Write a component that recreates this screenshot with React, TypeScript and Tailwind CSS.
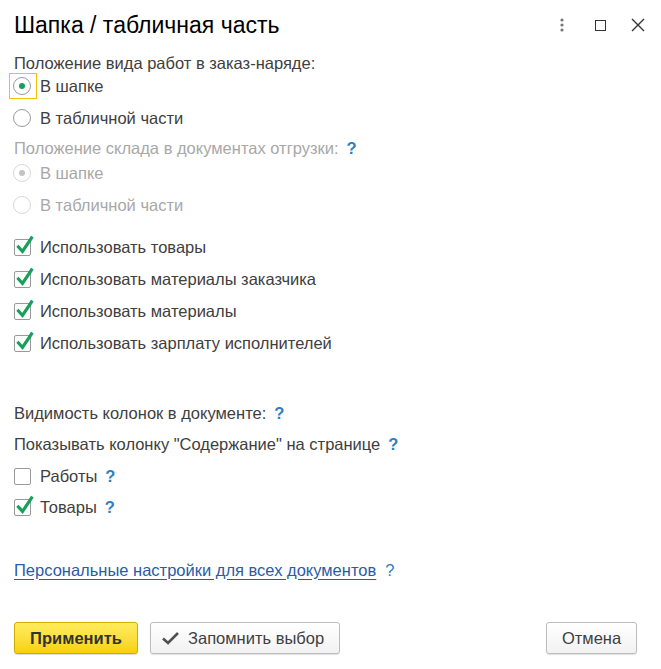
import React from "react";

function Help() {
  return <span className="ml-[8px] font-bold text-[#2d7fc2]">?</span>;
}

function Radio({ checked, disabled, focused, label }: { checked?: boolean; disabled?: boolean; focused?: boolean; label: string }) {
  return (
    <div className="flex h-[24px] items-center">
      <div className="relative ml-[-1px] mr-[9px] flex h-[18px] w-[18px] items-center justify-center">
        {focused && <span className="absolute left-[-4px] top-[-4px] h-[26px] w-[28px] border border-[#f2c300]" />}
        <div className={"flex h-[18px] w-[18px] items-center justify-center rounded-full border bg-white " + (disabled ? "border-[#d8d8d8]" : "border-[#9a9a9a]")}>
          {checked && <div className={"h-[6px] w-[6px] rounded-full " + (disabled ? "bg-[#c4c4c4]" : "bg-[#16a15a]")} />}
        </div>
      </div>
      <span className={disabled ? "text-[#a8a8a8]" : "text-[#404040]"}>{label}</span>
    </div>
  );
}

function Check({ checked, label, help }: { checked?: boolean; label: string; help?: boolean }) {
  return (
    <div className="flex h-[24px] items-center">
      <div className="relative mr-[9px] h-[17px] w-[17px] rounded-[2px] border border-[#9a9a9a] bg-white">
        {checked && (
          <svg className="absolute left-[1px] top-[-5px] overflow-visible" width="18" height="20" viewBox="0 0 18 20">
            <path d="M2.5 12 L6.5 16.5 L15.5 3" fill="none" stroke="#17a05a" strokeWidth="3.2" strokeLinecap="square" />
          </svg>
        )}
      </div>
      <span className="text-[#404040]">{label}</span>
      {help && <Help />}
    </div>
  );
}

export default function App() {
  return (
    <div className="h-[669px] w-[661px] overflow-hidden bg-white font-['Liberation_Sans'] text-[16.5px]">
      {/* header */}
      <div className="flex h-[50px] items-center pl-[14px] pr-[16px]">
        <h1 className="flex-1 text-[23px] text-black">Шапка / табличная часть</h1>
        <div className="flex items-center">
          <svg width="4" height="14" viewBox="0 0 4 14" className="mr-[31px]">
            <circle cx="2" cy="2" r="1.6" fill="#777" />
            <circle cx="2" cy="7" r="1.6" fill="#777" />
            <circle cx="2" cy="12" r="1.6" fill="#777" />
          </svg>
          <div className="mr-[25px] h-[11px] w-[11px] border-[1.5px] border-[#333]" />
          <svg width="14" height="14" viewBox="0 0 14 14">
            <path d="M1 1 L13 13 M13 1 L1 13" stroke="#333" strokeWidth="1.4" />
          </svg>
        </div>
      </div>

      <div className="flex flex-col px-[14px]">
        <div className="mt-[2px] flex h-[22px] items-center text-[#404040]">Положение вида работ в заказ-наряде:</div>
        <Radio checked focused label="В шапке" />
        <div className="mt-[8px]">
          <Radio label="В табличной части" />
        </div>

        <div className="mt-[6px] flex h-[24px] items-center text-[#a8a8a8]">
          Положение склада в документах отгрузки:
          <Help />
        </div>
        <div className="mt-[1px]">
          <Radio checked disabled label="В шапке" />
        </div>
        <div className="mt-[8px]">
          <Radio disabled label="В табличной части" />
        </div>

        <div className="mt-[18px] flex flex-col gap-[8px]">
          <Check checked label="Использовать товары" />
          <Check checked label="Использовать материалы заказчика" />
          <Check checked label="Использовать материалы" />
          <Check checked label="Использовать зарплату исполнителей" />
        </div>

        <div className="mt-[46px] flex h-[24px] items-center text-[#404040]">
          Видимость колонок в документе:
          <Help />
        </div>
        <div className="mt-[7px] flex h-[24px] items-center text-[#404040]">
          Показывать колонку "Содержание" на странице
          <Help />
        </div>
        <div className="mt-[8px]">
          <Check label="Работы" help />
        </div>
        <div className="mt-[7px]">
          <Check checked label="Товары" help />
        </div>

        <div className="mt-[39px] flex h-[24px] items-center">
          <a className="text-[#2a5ba8] underline underline-offset-[3px]" href="#">
            Персональные настройки для всех документов
          </a>
          <span className="ml-[9px] text-[#2d7fc2]">?</span>
        </div>

        {/* buttons */}
        <div className="mt-[40px] flex items-center">
          <button className="h-[32px] w-[124px] rounded-[3px] border border-[#cfae00] bg-gradient-to-b from-[#ffec5c] to-[#f6d200] font-bold text-[#333] shadow-[0_1px_1px_rgba(0,0,0,0.15)]">
            Применить
          </button>
          <button className="ml-[12px] flex h-[32px] w-[190px] items-center rounded-[3px] border border-[#bdbdbd] bg-gradient-to-b from-white to-[#f2f2f2] pl-[10px] text-[#404040] shadow-[0_1px_1px_rgba(0,0,0,0.12)]">
            <svg width="20" height="16" viewBox="0 0 20 16" className="mr-[7px]">
              <path d="M2 8.5 L7 13 L17 3" fill="none" stroke="#505050" strokeWidth="2.6" />
            </svg>
            Запомнить выбор
          </button>
          <div className="flex-1" />
          <button className="mr-[10px] h-[32px] w-[91px] rounded-[3px] border border-[#bdbdbd] bg-gradient-to-b from-white to-[#f2f2f2] text-[#404040] shadow-[0_1px_1px_rgba(0,0,0,0.12)]">
            Отмена
          </button>
        </div>
      </div>
    </div>
  );
}
